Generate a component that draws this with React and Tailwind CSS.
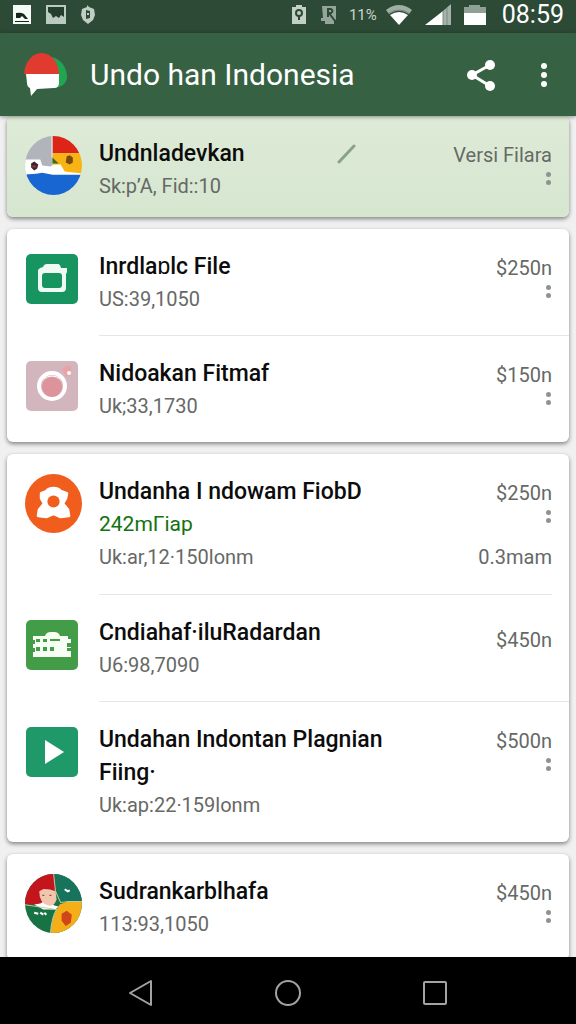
const groups = [
  {
    id: "featured",
    highlighted: true,
    rows: [
      { title: "Undnladevkan", sub: "Sk:p’A, Fid::10", price: "Versi Filara", icon: "flag", edit: true, menu: true, compact: true },
    ],
  },
  {
    id: "files",
    rows: [
      { title: "Inrdlaɒlc File", sub: "US:39,1050", price: "$250n", icon: "bag", menu: true },
      { title: "Nidoakan Fitmaf", sub: "Uk;33,1730", price: "$150n", icon: "camera", menu: true },
    ],
  },
  {
    id: "apps",
    rows: [
      {
        title: "Undanha I ndowam FiobD",
        tag: "242mΓiap",
        sub: "Uk:ar,12·150lonm",
        price: "$250n",
        extra: "0.3mam",
        icon: "badge",
        menu: true,
        inset: true,
        tall: true,
      },
      { title: "Cndiahaf·iluRadardan", sub: "U6:98,7090", price: "$450n", icon: "building" },
      {
        title: "Undahan Indontan Plagnian Fiing·",
        sub: "Uk:ap:22·159lonm",
        price: "$500n",
        icon: "play",
        menu: true,
        tall: true,
      },
    ],
  },
  {
    id: "more",
    rows: [
      { title: "Sudrankarblhafa", sub: "113:93,1050", price: "$450n", icon: "portrait", menu: true },
    ],
  },
];

const roundIcons = ["flag", "badge", "portrait"];

function IconArt({ name }) {
  switch (name) {
    case "flag":
      return (
        <svg viewBox="0 0 58 60" className="w-full">
          <clipPath id="flag-clip">
            <ellipse cx="29" cy="30" rx="28" ry="29" />
          </clipPath>
          <g clipPath="url(#flag-clip)">
            <path fill="#b1b5bb" d="M0 0h28v32H0z" />
            <path fill="#dc2417" d="M28 0h30v18H28z" />
            <path fill="#f8b414" d="M28 18h30v21H28z" />
            <path fill="#fff" d="M0 24h16l2 6 8 1 3-2h7l4 7 18 2v2H0z" />
            <path fill="#1766d2" d="M0 39l12-1 6-1 10 2h30v21H0z" />
            <path fill="#3b6b28" d="M28 22l6 6h-6z" />
            <path fill="#7b4a12" d="M42 21l3-1 3 2v5l-3 2-4-2z" />
            <path fill="#382331" d="M7 28l3-2 4 3-1 4-3 2-3-3z" />
            <path fill="#8c3540" d="M8 30h4v2H8z" />
            <path fill="#e8e8e8" d="M27 0h1v22h-1z" />
          </g>
        </svg>
      );
    case "bag":
      return (
        <svg viewBox="0 0 52 50" className="w-full">
          <rect width="52" height="50" rx="5" fill="#189461" />
          <path fill="#effaf4" d="M12 16l2-2 3-1q1-3 4-3h11q2 0 3 4h6v4l-1 2v14q0 4-4 4H16q-4 0-4-4z" />
          <rect x="16" y="19" width="20" height="15" rx="3" fill="#189461" />
        </svg>
      );
    case "camera":
      return (
        <svg viewBox="0 0 52 50" className="w-full">
          <rect width="52" height="50" rx="5" fill="#d3b5be" />
          <path fill="#e9a3a6" d="M36 8q4-4 9-3v9l-5 2z" />
          <circle cx="26" cy="25" r="13" fill="#dfb3ba" stroke="#fff" strokeWidth="4" />
          <path fill="none" stroke="#fff" d="M17 18q9-6 18 0" />
          <circle cx="26" cy="26" r="10" fill="#dd939b" />
          <circle cx="43" cy="12" r="2" fill="#fff" />
        </svg>
      );
    case "badge":
      return (
        <svg viewBox="0 0 58 60" className="w-full">
          <ellipse cx="29" cy="30" rx="28" ry="29" fill="#f05d1c" />
          <path
            fill="#fff"
            stroke="#fff"
            strokeWidth="3"
            strokeLinejoin="round"
            d="M17 20l5-2q2-3 7-3t7 3l6 2-1 5-3 5 5 6 1 6-8 1-7-3-7 3-8-1 1-6 5-6-3-5z"
          />
          <circle cx="29" cy="28" r="6" fill="#f05d1c" />
        </svg>
      );
    case "building":
      return (
        <svg viewBox="0 0 52 50" className="w-full">
          <rect width="52" height="50" rx="5" fill="#439c48" />
          <path fill="#f7fff5" d="M7 16h12q1-4 6-4h3q5 0 6 4h8v3h3v4h-4v4h4v10H7v-5h2v-4H7v-4h2v-4H7z" />
          <path fill="#439c48" d="M10 19h4v3h-4zm7 0h4v3h-4zm7 0h10v2H24zM10 27h4v4h-4zm7 0h4v4h-4zm7 0h4v4h-4zM41 28h4v3h-4z" />
        </svg>
      );
    case "play":
      return (
        <svg viewBox="0 0 52 50" className="w-full">
          <rect width="52" height="50" rx="5" fill="#20996a" />
          <path fill="#fff" d="M19 13v24l19-12z" />
        </svg>
      );
    default:
      return (
        <svg viewBox="0 0 58 60" className="w-full">
          <clipPath id="portrait-clip">
            <ellipse cx="29" cy="30" rx="28" ry="29" />
          </clipPath>
          <g clipPath="url(#portrait-clip)">
            <path fill="#187344" d="M0 0h58v60H0z" />
            <path fill="#c3161c" d="M0 0h30l1 22-5 9H0z" />
            <path fill="#18735c" d="M29 0h29v28H36z" />
            <path fill="#f4ae18" d="M35 31l8-3h15v32H26q1-17 9-29z" />
            <path fill="#fff" d="M10 31l6-1 5-3 9 5 4 1-3 3H19z" />
            <path fill="#f1c5ae" d="M15 18q8-6 16-1l1 9q-2 7-8 6-9-2-9-14z" />
            <path fill="#c3161c" d="M13 17q4-9 14-6l4 7q-10-4-18-1z" />
            <path fill="none" stroke="#8a5646" d="M18 22h2m5 0h2" />
            <path fill="none" stroke="#b9c9a9" d="M29 0l2 18 5 11 8-1h14M0 31l32 5q-5 8-6 24" />
            <path fill="none" stroke="#fff" strokeWidth="2" d="M10 39l4 1m2-1l3 2m1-2l2 2M40 16l3 2 2-1" />
            <path fill="#d0451c" d="M37 40l5-3 5 4-1 8-5 3-4-5z" />
          </g>
        </svg>
      );
  }
}

function MoreDots() {
  return (
    <button aria-label="More" className="flex w-2 flex-col items-center gap-[3px]">
      <span className="h-[5px] w-[5px] rounded-full bg-[#8f938f]" />
      <span className="h-[5px] w-[5px] rounded-full bg-[#8f938f]" />
    </button>
  );
}

function Row({ row, last }) {
  const round = roundIcons.includes(row.icon);
  const bottom = row.compact ? "pb-[14px]" : row.tall ? "pb-5" : "pb-[19px]";
  return (
    <li className="flex gap-4 pl-[17px]">
      <div className={`w-[59px] shrink-0 ${round ? "pt-[19px]" : "px-[2px] pt-[25px]"}`}>
        <div className={round ? "w-[59px]" : "w-[52px]"}>
          <IconArt name={row.icon} />
        </div>
      </div>
      <div
        className={`flex min-w-0 flex-1 justify-between pt-[21px] ${bottom} ${
          last ? "" : "border-b border-[#e6e6e6]"
        } ${row.inset ? "mr-[17px]" : "pr-[17px]"}`}
      >
        <div className="min-w-0 flex-1 pr-16">
          <h2 className="text-[23px] leading-[33px] font-medium text-[#0c0c0c]">{row.title}</h2>
          {row.tag && <p className="text-[21px] leading-[33px] text-[#12730f]">{row.tag}</p>}
          <p className="text-[20px] leading-[33px] text-[#666966]">{row.sub}</p>
        </div>
        {row.edit && (
          <button aria-label="Edit" className="mr-24 h-[33px] shrink-0">
            <svg width="20" height="20" viewBox="0 0 20 20">
              <path d="M2 18L17 2" stroke="#8aa18a" strokeWidth="3" strokeLinecap="round" />
            </svg>
          </button>
        )}
        <div
          className={`flex shrink-0 flex-col items-end text-[20px] leading-[33px] text-[#666966] ${
            row.menu ? "pt-[2px]" : "pt-2"
          }`}
        >
          <span>{row.price}</span>
          {row.menu && <MoreDots />}
          {row.extra && <span className="mt-[18px]">{row.extra}</span>}
        </div>
      </div>
    </li>
  );
}

function StatusBar() {
  return (
    <div className="flex h-[33px] shrink-0 items-center justify-between bg-[#2c4a35] pr-3 pb-1 pl-3 text-white">
      <div className="flex items-center gap-[14px]">
        <svg width="20" height="20" viewBox="0 0 20 20">
          <path fill="#f4faf5" d="M1 0h18v19H1z" />
          <path fill="#17251b" d="M4 8q5-1 8 1l4 5h-3l-3-3-2 2H4zM3 16h14v1H3z" />
        </svg>
        <svg width="20" height="20" viewBox="0 0 20 20">
          <path fill="#bccbc0" d="M0 0h20v19H0z" />
          <path fill="#24402d" d="M2 2h16v10l-3-2-2 3-3-2-3 2-2-4-3-2z" />
        </svg>
        <svg width="16" height="20" viewBox="0 0 16 20">
          <path fill="#c0cfc4" d="M7 0l2 2 5 2 1 6-2 5-5 4-5-4-2-5 1-6 5-2z" />
          <path fill="#2c4a35" d="M6 5l4 1v7l-4 1z" />
          <path fill="#c0cfc4" d="M7 8h2v2H7z" />
        </svg>
      </div>
      <div className="flex items-center">
        <svg width="14" height="20" viewBox="0 0 14 20" className="mr-[15px]">
          <path fill="#c2d0c6" d="M4 0h6v2h4v17H0V2h4z" />
          <circle cx="7" cy="8" r="3" fill="none" stroke="#2c4a35" strokeWidth="2" />
          <path stroke="#2c4a35" strokeWidth="2" d="M7 11v4" />
        </svg>
        <svg width="16" height="20" viewBox="0 0 16 20" className="mr-3">
          <path fill="#94a699" d="M1 1h14v14l-2-1v5H4v-3H0V13h2z" />
          <path fill="none" stroke="#2c4a35" strokeWidth="2" d="M7 12V4h3q3 2 0 4H8l6 8" />
        </svg>
        <span className="mr-2 text-[15px] leading-5 text-[#c8d5cc]">11%</span>
        <svg width="28" height="22" viewBox="0 0 28 22" className="mr-3">
          <path fill="#9eb0a4" d="M1 6q13-10 26 0l-3 4q-10-7-20 0z" />
          <path fill="#fff" d="M5 11q9-6 18 0l-9 10z" />
          <path fill="none" stroke="#768c7d" d="M4 9q10-6 20 0" />
        </svg>
        <svg width="27" height="22" viewBox="0 0 27 22" className="mr-3">
          <path fill="#fff" d="M0 21L18 7v14z" />
          <path fill="#a4b2a9" d="M18 7l8-7v21h-8z" />
          <path stroke="#798c80" d="M18 7v14M22 4v17" />
        </svg>
        <svg width="22" height="20" viewBox="0 0 22 20" className="mr-4">
          <path fill="#8fa095" d="M5 0h11v2h6v8H0V2h5z" />
          <path fill="#fff" d="M0 8h22v12H0z" />
        </svg>
        <span className="text-[25px] leading-8">08:59</span>
      </div>
    </div>
  );
}

function AppBar() {
  return (
    <header className="relative z-10 flex h-[83px] shrink-0 items-center bg-[#376143] pr-3 pl-6 text-white shadow-[0_1px_4px_rgba(0,0,0,0.4)]">
      <svg width="44" height="44" viewBox="0 0 44 44">
        <path fill="#20a551" d="M28 4q10 3 13 11 5 11-2 17-4 3-9 3z" />
        <path fill="#e13a2f" d="M0 21Q1 8 10 2q7-4 15 0 9 5 10 19z" />
        <path fill="#fff" d="M2 21h33v9q0 5-5 5l-17 1-6 7-1-8q-3-1-3-5z" />
      </svg>
      <h1 className="ml-[22px] flex-1 text-[30px] leading-10">Undo han Indonesia</h1>
      <button aria-label="Share" className="mr-5 p-2">
        <svg width="30" height="32" viewBox="0 0 30 32">
          <path d="M24 6L6 16l18 11" fill="none" stroke="#fff" strokeWidth="3" />
          <circle cx="24" cy="6" r="5" fill="#fff" />
          <circle cx="6" cy="16" r="5" fill="#fff" />
          <circle cx="24" cy="27" r="5" fill="#fff" />
        </svg>
      </button>
      <button aria-label="Menu" className="flex w-10 flex-col items-center gap-[3px] py-2">
        <span className="h-[6px] w-[6px] rounded-full bg-white" />
        <span className="h-[6px] w-[6px] rounded-full bg-white" />
        <span className="h-[6px] w-[6px] rounded-full bg-white" />
      </button>
    </header>
  );
}

function NavBar() {
  return (
    <nav className="flex h-[67px] shrink-0 items-center justify-center bg-black pb-1 text-[#a3a3a3]">
      <button aria-label="Back" className="flex h-full w-[147px] items-center justify-center pt-2">
        <svg width="26" height="28" viewBox="0 0 26 28" fill="none" stroke="currentColor" strokeWidth="2">
          <path d="M23 2v24L2 14z" strokeLinejoin="round" />
        </svg>
      </button>
      <button aria-label="Home" className="flex h-full w-[147px] items-center justify-center pt-2">
        <svg width="28" height="28" viewBox="0 0 28 28" fill="none" stroke="currentColor" strokeWidth="2">
          <circle cx="14" cy="14" r="12" />
        </svg>
      </button>
      <button aria-label="Recent apps" className="flex h-full w-[147px] items-center justify-center pt-2">
        <svg width="26" height="26" viewBox="0 0 26 26" fill="none" stroke="currentColor" strokeWidth="2">
          <rect x="2" y="2" width="22" height="22" rx="1" />
        </svg>
      </button>
    </nav>
  );
}

export default function App() {
  return (
    <div className="flex h-screen flex-col overflow-hidden bg-[#f0f0f1] font-['Roboto',sans-serif]">
      <StatusBar />
      <AppBar />
      <main className="flex min-h-0 flex-1 flex-col gap-3 overflow-hidden px-[7px]">
        {groups.map((group) => (
          <ul
            key={group.id}
            className={`shrink-0 rounded-md shadow-[0_2px_4px_rgba(0,0,0,0.45)] ${
              group.highlighted ? "bg-linear-to-b from-[#deebd7] to-[#d6e6cf]" : "bg-white"
            }`}
          >
            {group.rows.map((row, i) => (
              <Row key={row.title} row={row} last={i === group.rows.length - 1} />
            ))}
          </ul>
        ))}
      </main>
      <NavBar />
    </div>
  );
}
